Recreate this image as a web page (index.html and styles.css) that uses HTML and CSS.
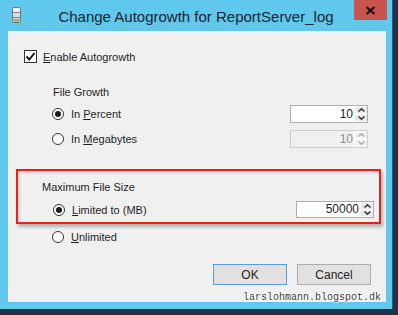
FILE: index.html
```html
<!DOCTYPE html>
<html lang="en">
  <head>
    <meta charset="UTF-8" />
    <title>Change Autogrowth for ReportServer_log</title>
    <link rel="stylesheet" href="styles.css">
  </head>
  <body>
    <div class="window">
      <div class="titlebar">
        <svg class="app-icon" width="9" height="16" viewBox="0 0 9 16">
          <rect x="0.5" y="0.5" width="8" height="15" rx="1" fill="#d9dde2" stroke="#6d7884" />
          <rect x="1.5" y="1.5" width="6" height="3" fill="#f4f6f8" />
          <line x1="1" y1="5.5" x2="8" y2="5.5" stroke="#7d8791" />
          <line x1="1" y1="10.5" x2="8" y2="10.5" stroke="#7d8791" />
          <rect x="1.5" y="12" width="6" height="3" fill="#9fb07a" />
        </svg>
        <div class="title">Change Autogrowth for ReportServer_log</div>
        <div class="close-btn">
          <svg width="11" height="9" viewBox="0 0 11 9">
            <path d="M1.5 1 L9.5 8 M9.5 1 L1.5 8" stroke="#111" stroke-width="2.2" />
          </svg>
        </div>
      </div>

      <div class="client">
        <div class="check-row">
          <span class="checkbox">
            <svg width="11" height="11" viewBox="0 0 11 11">
              <path d="M1.5 5.5 L4.3 8.5 L9.5 2" fill="none" stroke="#111" stroke-width="2" />
            </svg>
          </span>
          <span><u>E</u>nable Autogrowth</span>
        </div>

        <div class="group-title">File Growth</div>
        <div class="opt-row first">
          <span class="radio checked"></span>
          <span class="opt-label">In <u>P</u>ercent</span>
          <div class="spin">
            <span class="spin-value">10</span>
            <span class="spin-btns">
              <span class="spin-btn"><svg width="7" height="4" viewBox="0 0 7 4"><path d="M0.5 3.5 L3.5 0.8 L6.5 3.5" fill="none" stroke="#222" stroke-width="1.3" /></svg></span>
              <span class="spin-btn"><svg width="7" height="4" viewBox="0 0 7 4"><path d="M0.5 0.5 L3.5 3.2 L6.5 0.5" fill="none" stroke="#222" stroke-width="1.3" /></svg></span>
            </span>
          </div>
        </div>
        <div class="opt-row second">
          <span class="radio"></span>
          <span class="opt-label">In <u>M</u>egabytes</span>
          <div class="spin disabled">
            <span class="spin-value">10</span>
            <span class="spin-btns">
              <span class="spin-btn"><svg width="7" height="4" viewBox="0 0 7 4"><path d="M0.5 3.5 L3.5 0.8 L6.5 3.5" fill="none" stroke="#a8a8a8" stroke-width="1.3" /></svg></span>
              <span class="spin-btn"><svg width="7" height="4" viewBox="0 0 7 4"><path d="M0.5 0.5 L3.5 3.2 L6.5 0.5" fill="none" stroke="#a8a8a8" stroke-width="1.3" /></svg></span>
            </span>
          </div>
        </div>

        <div class="highlight">
          <div class="hl-title">Maximum File Size</div>
          <div class="opt-row limited">
            <span class="radio checked"></span>
            <span class="opt-label"><u>L</u>imited to (MB)</span>
            <div class="spin">
              <span class="spin-value">50000</span>
              <span class="spin-btns">
                <span class="spin-btn"><svg width="7" height="4" viewBox="0 0 7 4"><path d="M0.5 3.5 L3.5 0.8 L6.5 3.5" fill="none" stroke="#222" stroke-width="1.3" /></svg></span>
                <span class="spin-btn"><svg width="7" height="4" viewBox="0 0 7 4"><path d="M0.5 0.5 L3.5 3.2 L6.5 0.5" fill="none" stroke="#222" stroke-width="1.3" /></svg></span>
              </span>
            </div>
          </div>
        </div>

        <div class="opt-row unlimited">
          <span class="radio"></span>
          <span class="opt-label"><u>U</u>nlimited</span>
        </div>

        <div class="buttons">
          <button class="btn default">OK</button>
          <button class="btn">Cancel</button>
        </div>
      </div>

      <div class="watermark">larslohmann.blogspot.dk</div>
    </div>
  </body>
</html>
```

FILE: styles.css
```css
body {
  margin: 0;
  background: #1d3349;
  font-family: "Liberation Sans", Arial, sans-serif;
  font-size: 11px;
  color: #1e1e1e;
}

.window {
  position: relative;
  width: 393px;
  height: 309px;
  background: #5fc8ec;
  box-sizing: border-box;
  border-right: 1px solid #2b5a7a;
}

.titlebar {
  height: 31px;
  display: grid;
  grid-template-columns: 1fr auto 1fr;
  align-items: start;
}

.app-icon {
  margin: 7px 0 0 12px;
}

.title {
  font-size: 15px;
  line-height: 15px;
  padding-top: 9px;
  color: #1b2530;
}

.close-btn {
  justify-self: end;
  margin-right: 5px;
  width: 33px;
  height: 20px;
  background: #c9544d;
  display: flex;
  align-items: center;
  justify-content: center;
}

.client {
  margin: 0 6px 0 8px;
  height: 271px;
  background: #f0f0f0;
  box-sizing: border-box;
  padding: 19px 0 0 0;
}

.check-row {
  display: flex;
  align-items: center;
  gap: 6px;
  height: 13px;
  margin-left: 16px;
}

.checkbox {
  width: 13px;
  height: 13px;
  box-sizing: border-box;
  border: 1px solid #333;
  background: #fff;
  display: flex;
  align-items: center;
  justify-content: center;
}

.group-title {
  margin: 22px 0 0 45px;
  line-height: 14px;
}

.opt-row {
  display: flex;
  align-items: center;
  height: 18px;
}

.opt-row.first {
  margin: 6px 18px 0 44px;
}

.opt-row.second {
  margin: 7px 18px 0 44px;
}

.radio {
  width: 12px;
  height: 12px;
  box-sizing: border-box;
  border: 1px solid #333;
  border-radius: 50%;
  background: #fff;
  display: flex;
  align-items: center;
  justify-content: center;
  margin-right: 7px;
}

.radio.checked::after {
  content: "";
  width: 6px;
  height: 6px;
  border-radius: 50%;
  background: #1a1a1a;
}

.opt-label {
  flex: 1;
}

.spin {
  width: 78px;
  height: 18px;
  box-sizing: border-box;
  border: 1px solid #abadb3;
  background: #fff;
  display: flex;
  font-size: 12px;
}

.spin-value {
  flex: 1;
  text-align: right;
  line-height: 16px;
  padding-right: 1px;
}

.spin-btns {
  width: 13px;
  display: flex;
  flex-direction: column;
}

.spin-btn {
  flex: 1;
  display: flex;
  align-items: center;
  justify-content: center;
  background: #e9e9e9;
  border: 1px solid #fff;
  border-right: 0;
}

.spin.disabled {
  background: #f0f0f0;
  border-color: #cccccc;
  color: #8c8c8c;
}

.spin.disabled .spin-btn {
  background: #f0f0f0;
}

.highlight {
  margin: 21px 0 0 8px;
  width: 365px;
  height: 55px;
  box-sizing: border-box;
  border: 2px solid #e8201c;
  padding: 9px 5px 0 24px;
  box-shadow: 2px 3px 3px rgba(0, 0, 0, 0.25), inset 2px 2px 3px rgba(0, 0, 0, 0.12);
}

.hl-title {
  line-height: 14px;
}

.opt-row.limited {
  margin: 7px 0 0 11px;
  height: 17px;
}

.opt-row.limited .spin {
  height: 17px;
}

.opt-row.limited .spin-value {
  line-height: 15px;
}

.opt-row.unlimited {
  margin: 4px 0 0 44px;
}

.buttons {
  display: flex;
  justify-content: flex-end;
  gap: 10px;
  margin: 18px 15px 0 0;
}

.btn {
  width: 74px;
  height: 21px;
  font-family: "Liberation Sans", Arial, sans-serif;
  font-size: 12px;
  color: #1e1e1e;
  background: #e1e1e1;
  border: 1px solid #adadad;
  padding: 0;
}

.btn.default {
  border-color: #5a9be0;
}

.watermark {
  position: absolute;
  left: 243px;
  top: 291px;
  font-family: "Liberation Mono", "Courier New", monospace;
  font-size: 10px;
  line-height: 14px;
  color: #3a3a3a;
  text-shadow: 1px 0 0 #fff, -1px 0 0 #fff, 0 1px 0 #fff, 0 -1px 0 #fff;
}
```
